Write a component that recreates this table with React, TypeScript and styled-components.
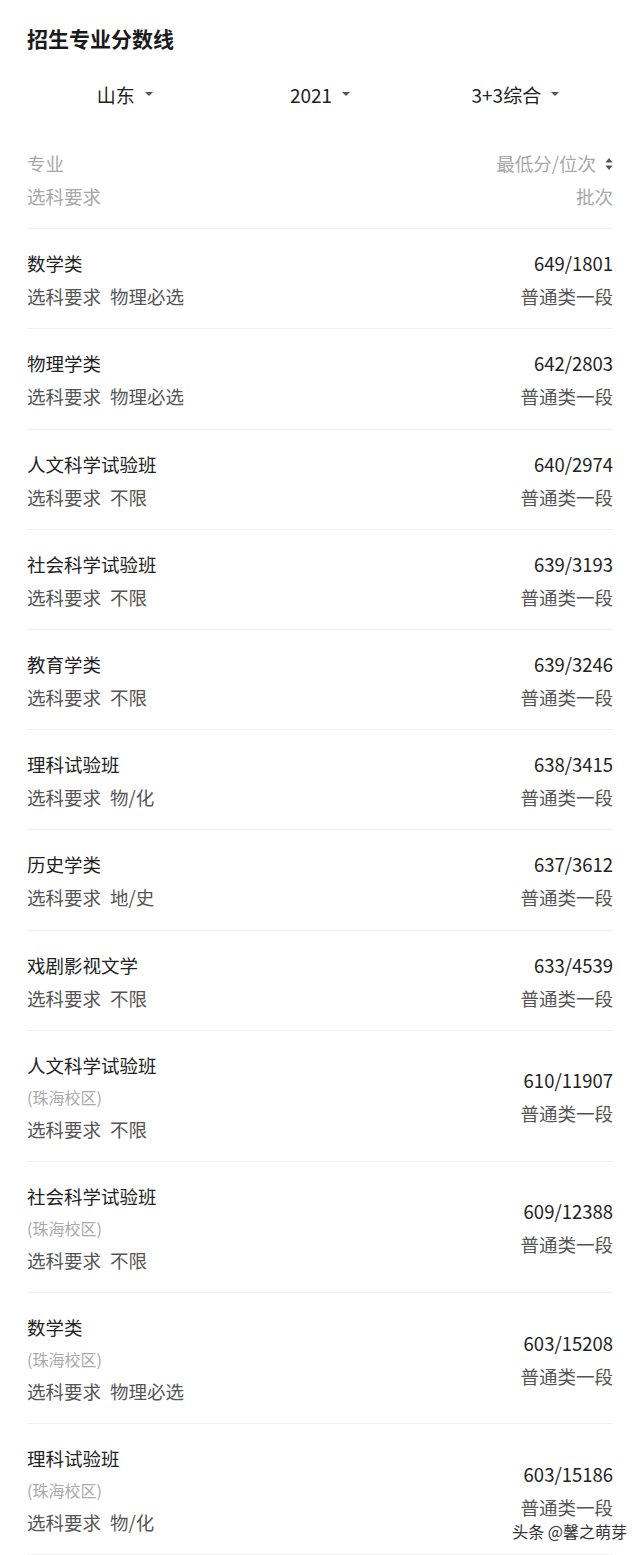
import React from "react";
import styled, { createGlobalStyle } from "styled-components";

const Global = createGlobalStyle`
  html, body { margin: 0; padding: 0; background: #fff; }
  body { font-family: "Noto Sans CJK SC", "Noto Sans", sans-serif; color: #222; }
  * { box-sizing: border-box; }
`;

const Page = styled.div`
  position: relative;
  width: 640px;
  height: 1555px;
  overflow: hidden;
  padding: 0 27px;
  background: #fff;
`;

const Title = styled.h1`
  margin: 0;
  padding-top: 24px;
  font-size: 21px;
  line-height: 28px;
  font-weight: 700;
  color: #1a1a1a;
`;

const Filters = styled.div`
  display: grid;
  grid-template-columns: 1fr 1fr 1fr;
  margin-top: 15px;
  height: 54px;
  align-items: center;
`;

const Filter = styled.div`
  display: flex;
  justify-content: center;
  align-items: center;
  gap: 10px;
  font-size: 19px;
  color: #222;
`;

const Caret = styled.span`
  width: 0;
  height: 0;
  border-left: 4px solid transparent;
  border-right: 4px solid transparent;
  border-top: 4px solid #555;
`;

const Row = styled.div<{ $head?: boolean }>`
  display: flex;
  justify-content: space-between;
  align-items: center;
  padding: 18px 0 15.2px;
  border-bottom: 1px solid #f1f1f1;
  margin-top: ${(p) => (p.$head ? "8px" : "0")};
`;

const Col = styled.div<{ $right?: boolean }>`
  display: flex;
  flex-direction: column;
  align-items: ${(p) => (p.$right ? "flex-end" : "flex-start")};
`;

const Line = styled.div<{ $tone: "main" | "sub" | "muted" }>`
  font-size: 18.5px;
  line-height: 33px;
  color: ${(p) => (p.$tone === "main" ? "#222" : p.$tone === "sub" ? "#555" : "#a8a8a8")};
  white-space: nowrap;
  display: flex;
  align-items: center;
  gap: 9px;
`;

const Campus = styled.div`
  font-size: 16px;
  line-height: 31px;
  color: #aaa;
`;

const Watermark = styled.div`
  position: absolute;
  right: 13px;
  bottom: 14px;
  font-size: 16px;
  line-height: 20px;
  color: #333;
  text-shadow: 0 0 2px #fff, 0 0 2px #fff, 0 0 3px #fff;
`;

const SortIcon = () => (
  <svg width="8" height="14" viewBox="0 0 8 14">
    <path d="M4 1 L7.5 5.5 L0.5 5.5 Z" fill="#555" />
    <path d="M4 13 L7.5 8.5 L0.5 8.5 Z" fill="#555" />
  </svg>
);

type Item = { name: string; campus?: boolean; req: string; score: string };

const items: Item[] = [
  { name: "数学类", req: "物理必选", score: "649/1801" },
  { name: "物理学类", req: "物理必选", score: "642/2803" },
  { name: "人文科学试验班", req: "不限", score: "640/2974" },
  { name: "社会科学试验班", req: "不限", score: "639/3193" },
  { name: "教育学类", req: "不限", score: "639/3246" },
  { name: "理科试验班", req: "物/化", score: "638/3415" },
  { name: "历史学类", req: "地/史", score: "637/3612" },
  { name: "戏剧影视文学", req: "不限", score: "633/4539" },
  { name: "人文科学试验班", campus: true, req: "不限", score: "610/11907" },
  { name: "社会科学试验班", campus: true, req: "不限", score: "609/12388" },
  { name: "数学类", campus: true, req: "物理必选", score: "603/15208" },
  { name: "理科试验班", campus: true, req: "物/化", score: "603/15186" },
];

export default function App() {
  return (
    <Page>
      <Global />
      <Title>招生专业分数线</Title>
      <Filters>
        <Filter>山东<Caret /></Filter>
        <Filter>2021<Caret /></Filter>
        <Filter>3+3综合<Caret /></Filter>
      </Filters>
      <Row $head>
        <Col>
          <Line $tone="muted">专业</Line>
          <Line $tone="muted">选科要求</Line>
        </Col>
        <Col $right>
          <Line $tone="muted">最低分/位次<SortIcon /></Line>
          <Line $tone="muted">批次</Line>
        </Col>
      </Row>
      {items.map((it, i) => (
        <Row key={i}>
          <Col>
            <Line $tone="main">{it.name}</Line>
            {it.campus && <Campus>(珠海校区)</Campus>}
            <Line $tone="sub">
              <span>选科要求</span>
              <span>{it.req}</span>
            </Line>
          </Col>
          <Col $right>
            <Line $tone="main">{it.score}</Line>
            <Line $tone="sub">普通类一段</Line>
          </Col>
        </Row>
      ))}
      <Watermark>头条 @馨之萌芽</Watermark>
    </Page>
  );
}
